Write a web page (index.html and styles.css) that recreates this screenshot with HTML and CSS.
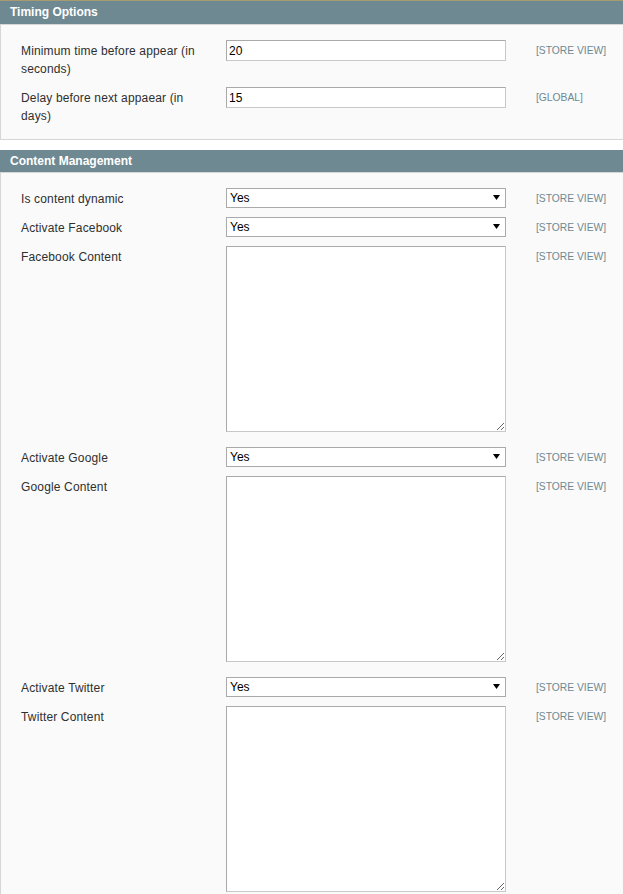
FILE: index.html
```html
<!DOCTYPE html>
<html>
<head>
<meta charset="utf-8">
<link rel="stylesheet" href="styles.css">
</head>
<body>
<div class="page">
  <div class="section">
    <div class="head first">Timing Options</div>
    <div class="fieldset">
      <div class="row">
        <div class="label">Minimum time before appear (in seconds)</div>
        <div class="value"><input class="input-text" type="text" value="20"></div>
        <div class="scope">[STORE VIEW]</div>
      </div>
      <div class="row">
        <div class="label">Delay before next appaear (in days)</div>
        <div class="value"><input class="input-text" type="text" value="15"></div>
        <div class="scope">[GLOBAL]</div>
      </div>
    </div>
  </div>
  <div class="section">
    <div class="head">Content Management</div>
    <div class="fieldset">
      <div class="row">
        <div class="label">Is content dynamic</div>
        <div class="value"><div class="select-wrap"><select><option>Yes</option><option>No</option></select><svg class="arrow" width="7" height="5" viewBox="0 0 7 5"><polygon points="0,0 7,0 3.5,5" fill="#000"/></svg></div></div>
        <div class="scope">[STORE VIEW]</div>
      </div>
      <div class="row">
        <div class="label">Activate Facebook</div>
        <div class="value"><div class="select-wrap"><select><option>Yes</option><option>No</option></select><svg class="arrow" width="7" height="5" viewBox="0 0 7 5"><polygon points="0,0 7,0 3.5,5" fill="#000"/></svg></div></div>
        <div class="scope">[STORE VIEW]</div>
      </div>
      <div class="row tall">
        <div class="label">Facebook Content</div>
        <div class="value"><textarea></textarea></div>
        <div class="scope">[STORE VIEW]</div>
      </div>
      <div class="row">
        <div class="label">Activate Google</div>
        <div class="value"><div class="select-wrap"><select><option>Yes</option><option>No</option></select><svg class="arrow" width="7" height="5" viewBox="0 0 7 5"><polygon points="0,0 7,0 3.5,5" fill="#000"/></svg></div></div>
        <div class="scope">[STORE VIEW]</div>
      </div>
      <div class="row tall">
        <div class="label">Google Content</div>
        <div class="value"><textarea></textarea></div>
        <div class="scope">[STORE VIEW]</div>
      </div>
      <div class="row">
        <div class="label">Activate Twitter</div>
        <div class="value"><div class="select-wrap"><select><option>Yes</option><option>No</option></select><svg class="arrow" width="7" height="5" viewBox="0 0 7 5"><polygon points="0,0 7,0 3.5,5" fill="#000"/></svg></div></div>
        <div class="scope">[STORE VIEW]</div>
      </div>
      <div class="row tall">
        <div class="label">Twitter Content</div>
        <div class="value"><textarea></textarea></div>
        <div class="scope">[STORE VIEW]</div>
      </div>
    </div>
  </div>
</div>
</body>
</html>
```
FILE: styles.css
```css
html, body {
  margin: 0;
  padding: 0;
  overflow: hidden;
  background: #fff;
}
body {
  font-family: "Liberation Sans", Arial, sans-serif;
  font-size: 12px;
  color: #2f2f2f;
}
.page {
  border-top: 1px solid #a69b70;
  width: 625px;
}
.section {
  margin-bottom: 10px;
}
.head {
  background: #6f8992;
  color: #fff;
  font-weight: bold;
  height: 22px;
  line-height: 22px;
  padding-left: 10px;
}
.head.first {
  height: 23px;
  line-height: 23px;
}
.fieldset {
  background: #fafafa;
  border: 1px solid #d6d6d6;
  padding: 15px 0 5px 20px;
}
.row {
  display: flex;
  align-items: flex-start;
  padding-bottom: 9px;
}
.label {
  width: 185px;
  padding-right: 20px;
  padding-top: 2px;
  line-height: 18px;
  letter-spacing: 0.15px;
}
.value {
  width: 280px;
}
.scope {
  padding-left: 30px;
  padding-top: 2px;
  line-height: 18px;
  font-size: 10.3px;
  color: #6f8992;
  white-space: nowrap;
}
.input-text {
  display: block;
  box-sizing: border-box;
  width: 280px;
  height: 21px;
  margin: 0;
  padding: 0 2px;
  border: 1px solid;
  border-color: #aaa #c8c8c8 #c8c8c8 #aaa;
  background: #fff;
  font-family: "Liberation Sans", Arial, sans-serif;
  font-size: 12px;
  color: #000;
  outline: none;
}
.select-wrap {
  position: relative;
  width: 280px;
  height: 20px;
}
.select-wrap select {
  display: block;
  box-sizing: border-box;
  width: 280px;
  height: 20px;
  margin: 0;
  padding: 0 0 0 3px;
  border: 1px solid #aaa;
  border-radius: 0;
  background: #fff;
  -webkit-appearance: none;
  appearance: none;
  font-family: "Liberation Sans", Arial, sans-serif;
  font-size: 12px;
  color: #000;
  outline: none;
}
.arrow {
  position: absolute;
  right: 6px;
  top: 7px;
}
textarea {
  display: block;
  box-sizing: border-box;
  width: 280px;
  height: 186px;
  margin: 0 0 6px;
  padding: 2px;
  border: 1px solid;
  border-color: #aaa #c8c8c8 #c8c8c8 #aaa;
  background: #fff;
  font-family: "Liberation Sans", Arial, sans-serif;
  font-size: 12px;
  outline: none;
}
```
